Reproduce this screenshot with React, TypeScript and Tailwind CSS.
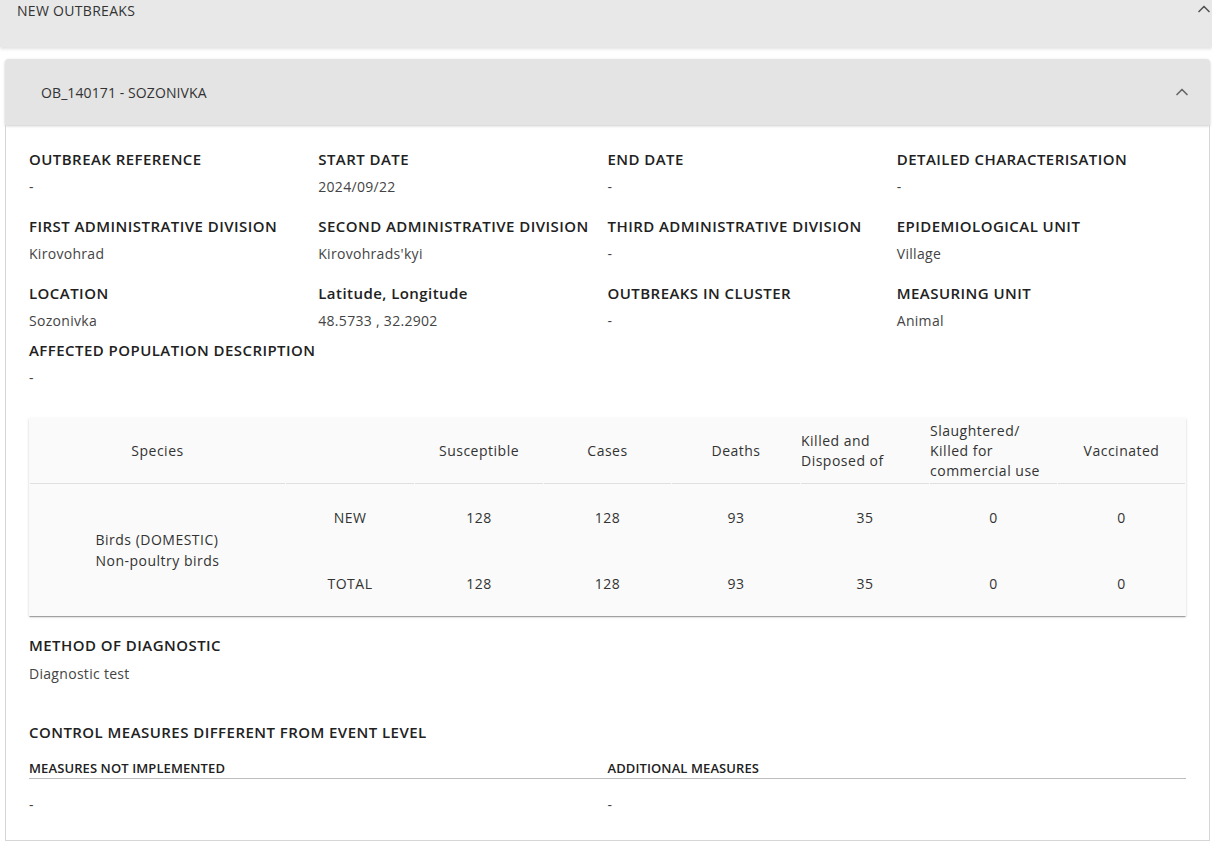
import { ChevronUp } from "lucide-react";

type Field = { label: string; value: string };

const fields: Field[] = [
  { label: "OUTBREAK REFERENCE", value: "-" },
  { label: "START DATE", value: "2024/09/22" },
  { label: "END DATE", value: "-" },
  { label: "DETAILED CHARACTERISATION", value: "-" },
  { label: "FIRST ADMINISTRATIVE DIVISION", value: "Kirovohrad" },
  { label: "SECOND ADMINISTRATIVE DIVISION", value: "Kirovohrads'kyi" },
  { label: "THIRD ADMINISTRATIVE DIVISION", value: "-" },
  { label: "EPIDEMIOLOGICAL UNIT", value: "Village" },
  { label: "LOCATION", value: "Sozonivka" },
  { label: "Latitude, Longitude", value: "48.5733 , 32.2902" },
  { label: "OUTBREAKS IN CLUSTER", value: "-" },
  { label: "MEASURING UNIT", value: "Animal" },
];

const rows = [
  { type: "NEW", values: ["128", "128", "93", "35", "0", "0"] },
  { type: "TOTAL", values: ["128", "128", "93", "35", "0", "0"] },
];

function InfoField({ label, value, gap = "mt-[8px]" }: Field & { gap?: string }) {
  return (
    <div>
      <div className="text-[15px] font-semibold leading-5 tracking-[0.45px] text-[#212121]">{label}</div>
      <div className={`${gap} text-[14px] leading-5 tracking-[0.3px] text-[#444]`}>{value}</div>
    </div>
  );
}

function SpeciesTable() {
  const th = "border-b border-[#e0e0e0] font-normal";
  return (
    <table className="w-full table-fixed border-separate border-spacing-x-px border-spacing-y-0 bg-[#fafafa] text-[14px] tracking-[0.5px] text-[#333] shadow-[0_2px_1px_-1px_rgba(0,0,0,0.2),0_1px_1px_0_rgba(0,0,0,0.14),0_1px_3px_0_rgba(0,0,0,0.12)]">
      <colgroup>
        <col className="w-[255px]" />
        <col className="w-[128px]" />
        <col className="w-[128px]" />
        <col className="w-[127px]" />
        <col className="w-[128px]" />
        <col className="w-[128px]" />
        <col className="w-[127px]" />
        <col className="w-[127px]" />
      </colgroup>
      <thead>
        <tr className="h-[66px]">
          <th className={`${th} text-center`}>Species</th>
          <th className={th}></th>
          <th className={`${th} text-center`}>Susceptible</th>
          <th className={`${th} text-center`}>Cases</th>
          <th className={`${th} text-center`}>Deaths</th>
          <th className={`${th} pr-8 text-left leading-5`}>Killed and Disposed of</th>
          <th className={`${th} pr-1 text-left leading-5`}>Slaughtered/ Killed for commercial use</th>
          <th className={`${th} text-center`}>Vaccinated</th>
        </tr>
      </thead>
      <tbody>
        {rows.map((row, idx) => (
          <tr key={row.type} className="h-[66px]">
            {idx === 0 && (
              <td rowSpan={2} className="text-center align-middle">
                <div className="inline-block text-left leading-[21px]">
                  Birds (DOMESTIC)
                  <br />
                  Non-poultry birds
                </div>
              </td>
            )}
            <td className="text-center">{row.type}</td>
            {row.values.map((v, i) => (
              <td key={i} className="text-center">
                {v}
              </td>
            ))}
          </tr>
        ))}
      </tbody>
    </table>
  );
}

export default function App() {
  return (
    <div className="min-h-screen bg-white font-['Open_Sans','Liberation_Sans',sans-serif]">
      {/* New outbreaks panel header */}
      <div className="relative h-[47px] bg-[#e8e8e8] px-[17px] shadow-[0_2px_3px_rgba(0,0,0,0.12)]">
        <div className="text-[14px] leading-[22px] tracking-[0.3px] text-[#333]">NEW OUTBREAKS</div>
        <ChevronUp className="absolute -top-px right-[-2px] h-5 w-5 text-[#555]" strokeWidth={2} />
      </div>

      {/* Outbreak card */}
      <div className="ml-[5px] mr-[2px] mt-3">
        <div className="flex h-[66px] items-center justify-between rounded-t bg-[#e4e4e4] pl-9 pr-[18px] shadow-[0_1px_3px_rgba(0,0,0,0.2)]">
          <span className="text-[14px] tracking-[0.1px] text-[#333]">OB_140171 - SOZONIVKA</span>
          <ChevronUp className="h-5 w-5 text-[#666]" strokeWidth={2} />
        </div>

        <div className="border-x border-b border-[#d6d6d6] px-[23px] pb-[25px] pt-6">
          <div className="grid grid-cols-4 gap-y-[19px]">
            {fields.map((f) => (
              <InfoField key={f.label} {...f} />
            ))}
          </div>
          <div className="mt-[9px]">
            <InfoField label="AFFECTED POPULATION DESCRIPTION" value="-" />
          </div>

          <div className="mt-[30px]">
            <SpeciesTable />
          </div>

          <div className="mt-[19px]">
            <InfoField label="METHOD OF DIAGNOSTIC" value="Diagnostic test" gap="mt-[9px]" />
          </div>

          <div className="mt-[38px] text-[15px] font-semibold leading-5 tracking-[0.45px] text-[#212121]">
            CONTROL MEASURES DIFFERENT FROM EVENT LEVEL
          </div>
          <div className="mt-[17px] grid grid-cols-2 border-b border-[#bdbdbd] pb-px">
            <div className="text-[13px] font-semibold leading-[18px] tracking-[0.1px] text-[#212121]">
              MEASURES NOT IMPLEMENTED
            </div>
            <div className="text-[13px] font-semibold leading-[18px] tracking-[0.1px] text-[#212121]">
              ADDITIONAL MEASURES
            </div>
          </div>
          <div className="mt-4 grid grid-cols-2 text-[14px] leading-5 text-[#444]">
            <div>-</div>
            <div>-</div>
          </div>
        </div>
      </div>
    </div>
  );
}
